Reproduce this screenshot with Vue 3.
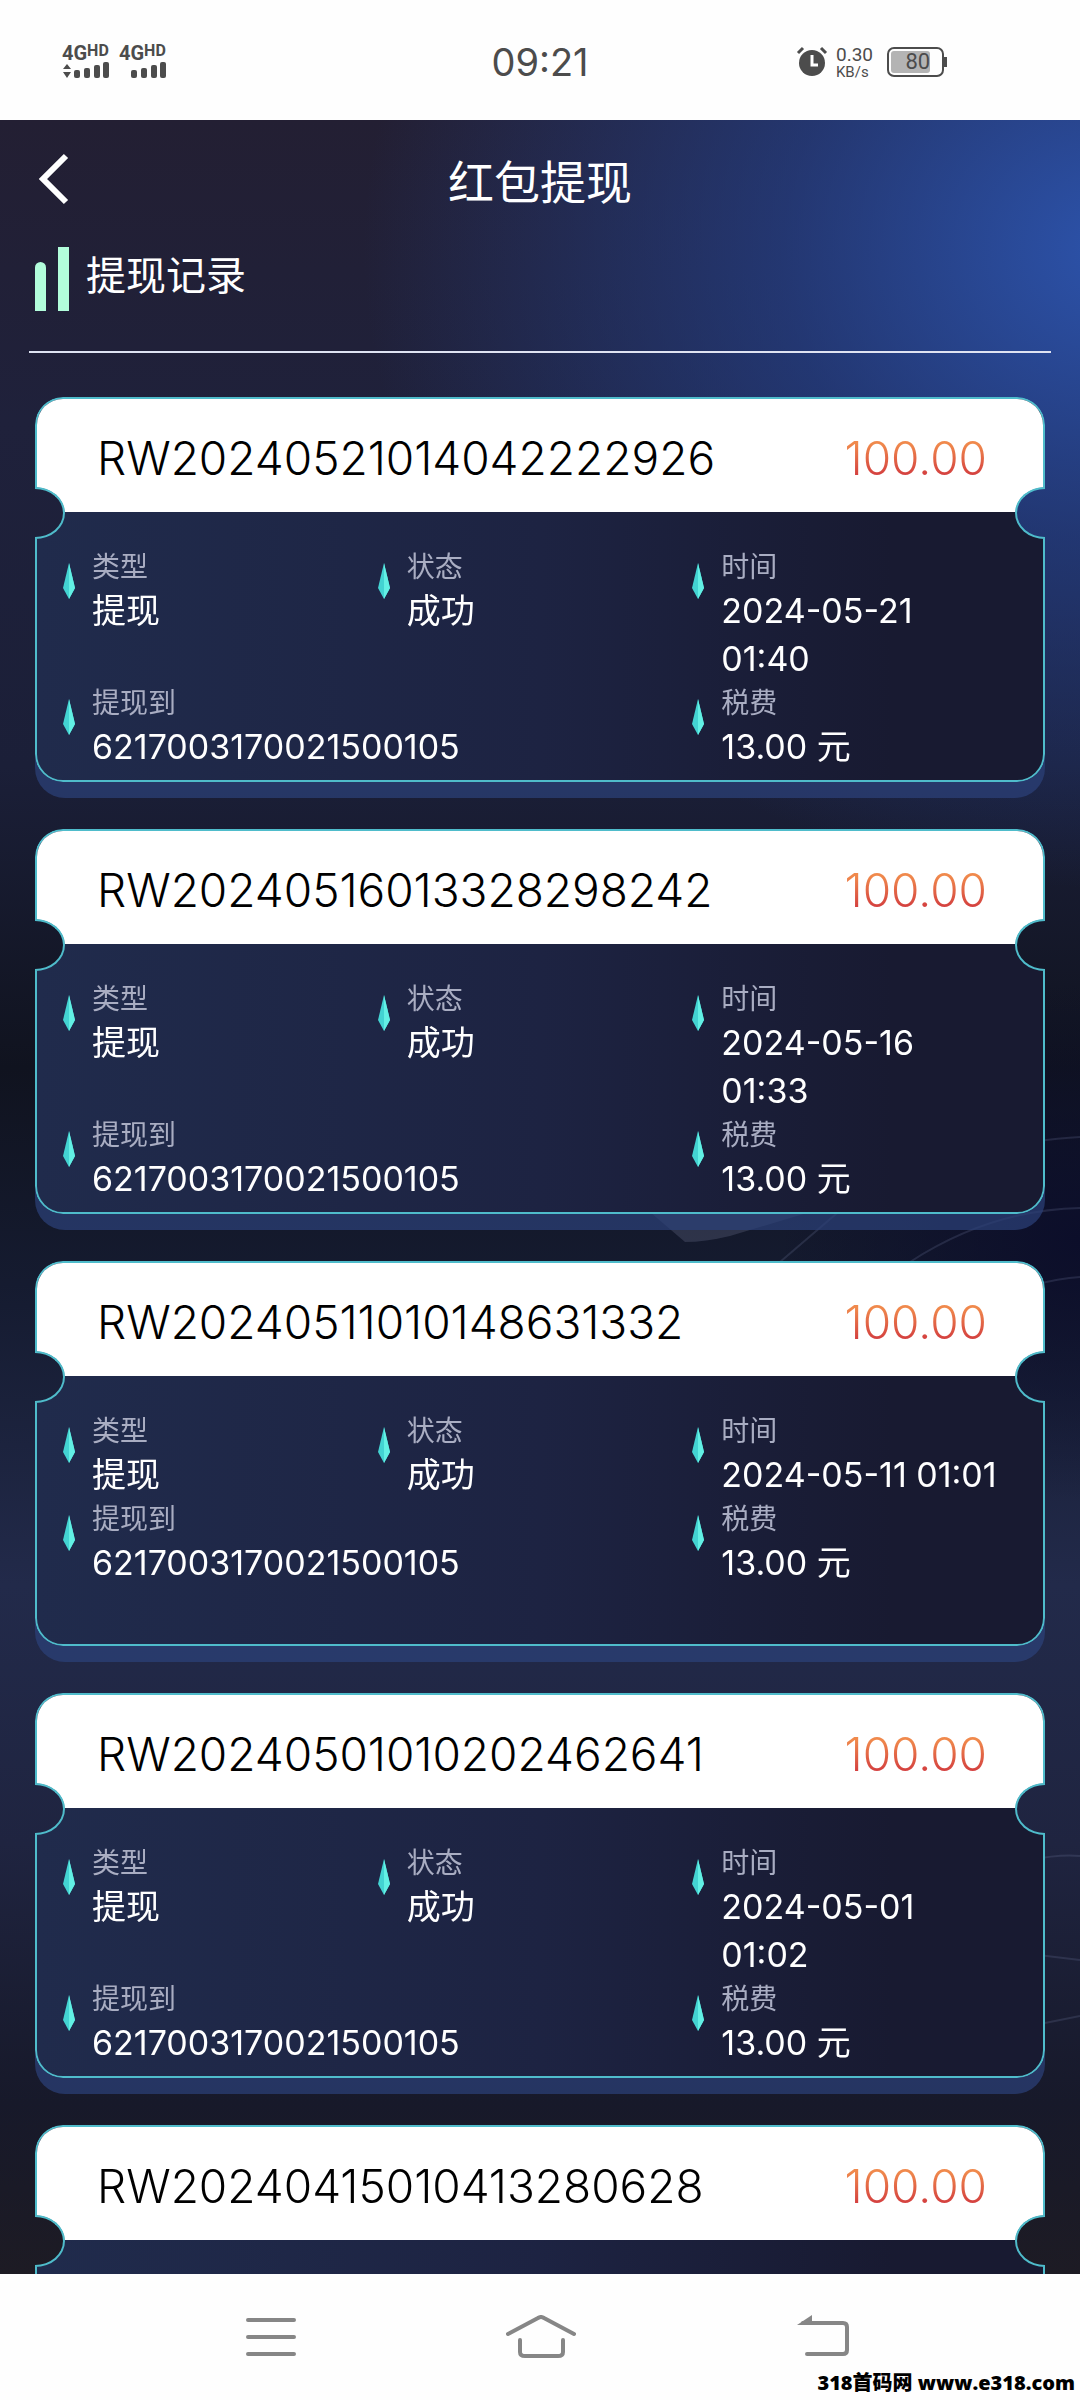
<script setup>
const fields = (time) => [
  { label: '类型', value: '提现' },
  { label: '状态', value: '成功' },
  { label: '时间', value: time },
  { label: '提现到', value: '6217003170021500105', wide: true },
  { label: '税费', value: '13.00 元' },
]

const records = [
  { id: 'RW20240521014042222926', amount: '100.00', fields: fields('2024-05-21 01:40') },
  { id: 'RW20240516013328298242', amount: '100.00', fields: fields('2024-05-16 01:33') },
  { id: 'RW20240511010148631332', amount: '100.00', fields: fields('2024-05-11 01:01') },
  { id: 'RW20240501010202462641', amount: '100.00', fields: fields('2024-05-01 01:02') },
  { id: 'RW20240415010413280628', amount: '100.00', fields: [] },
]
</script>

<template>
  <div class="phone">
    <header class="status">
      <div class="signals">
        <div v-for="sim in 2" :key="sim" class="signal">
          <div class="net">4G<span class="hd">HD</span></div>
          <svg width="48" height="18" viewBox="0 0 48 18" fill="#4c4c4c" aria-hidden="true">
            <path v-if="sim === 1" d="M1 8 5 3l4 5zM1 11h8l-4 6z" />
            <rect x="12" y="9" width="6" height="8" rx="2" />
            <rect x="22" y="7" width="6" height="10" rx="2" />
            <rect x="32" y="4" width="6" height="13" rx="2" />
            <rect x="41" y="1" width="6" height="16" rx="2" />
          </svg>
        </div>
      </div>
      <time class="clock">09:21</time>
      <div class="indicators">
        <svg width="32" height="32" viewBox="0 0 32 32" aria-hidden="true">
          <circle cx="16" cy="17" r="13" fill="#4c4c4c" />
          <path d="M2 7 7 2M30 7l-5-5" stroke="#4c4c4c" stroke-width="3" />
          <path d="M16 9v10h6" fill="none" stroke="#fff" stroke-width="3" />
        </svg>
        <div class="speed"><span class="rate">0.30</span><span class="unit">KB/s</span></div>
        <div class="battery"><div class="level">80</div></div>
      </div>
    </header>

    <main class="app">
      <svg class="scenery" viewBox="0 0 1080 2154" preserveAspectRatio="none" aria-hidden="true">
        <path d="M650 1092l35 30q20 0 45-6l80-24z" fill="#8d93b0" opacity=".22" />
        <path
          d="M780 1142l70-60M1030 1022q30-4 50-5M910 1142q80-52 170-54M1030 1166q30-8 50-9M1030 1740q30-6 50-4M1030 1834l50 6M780 1660l20 30M1030 1906l50-10"
          fill="none" stroke="#7d86ad" stroke-width="2" opacity=".2"
        />
      </svg>
      <div class="titlebar">
        <button class="back" type="button" aria-label="返回">
          <svg width="32" height="52" viewBox="0 0 32 52" fill="none" aria-hidden="true">
            <path d="M29 3 6 26l23 23" stroke="#fff" stroke-width="6" />
          </svg>
        </button>
        <h1>红包提现</h1>
      </div>
      <div class="section">
        <div class="bars"><i class="short"></i><i class="tall"></i></div>
        <h2>提现记录</h2>
      </div>
      <ul class="list">
        <li v-for="record in records" :key="record.id" class="ticket">
          <div class="surface">
            <div class="head">
              <span>{{ record.id }}</span>
              <strong class="amount">{{ record.amount }}</strong>
            </div>
            <dl class="details">
              <div
                v-for="field in record.fields"
                :key="field.label"
                class="field"
                :class="{ wide: field.wide }"
              >
                <svg class="gem" width="12" height="36" viewBox="0 0 12 36" aria-hidden="true">
                  <path d="M6 0 12 25 6 36 0 25z" fill="#43d3d2" />
                  <path d="M6 0 12 25 6 36z" fill="#62f0e4" />
                </svg>
                <div>
                  <dt>{{ field.label }}</dt>
                  <dd>{{ field.value }}</dd>
                </div>
              </div>
            </dl>
          </div>
          <i class="notch left"></i>
          <i class="notch right"></i>
        </li>
      </ul>
    </main>

    <nav class="keys">
      <button type="button" aria-label="菜单">
        <svg width="50" height="44" viewBox="0 0 50 44" aria-hidden="true">
          <path d="M2 5h46M2 22h46M2 39h46" />
        </svg>
      </button>
      <button type="button" aria-label="主页">
        <svg width="70" height="44" viewBox="0 0 70 44" aria-hidden="true">
          <path d="M2 19 32 3q3-2 6 0l30 16M14 25v12q0 4 5 4h33q5 0 5-4V25" />
        </svg>
      </button>
      <button type="button" aria-label="返回上一级">
        <svg width="64" height="44" viewBox="0 0 64 44" aria-hidden="true">
          <path d="M18 8h40q4 0 4 4v23q0 4-4 4H22" />
          <path class="tip" d="M12 10 27 0v10z" />
        </svg>
      </button>
      <a class="site" href="#">318首码网 www.e318.com</a>
    </nav>
  </div>
</template>

<style>
body {
  background: #fefefe;
}
</style>

<style scoped>
.phone {
  display: flex;
  flex-direction: column;
  height: 100vh;
  overflow: hidden;
  font-family: Inter, "Noto Sans CJK SC", sans-serif;
  background: #fefefe;
}

button {
  padding: 0;
  border: 0;
  background: none;
  display: block;
}

svg {
  display: block;
}

.status {
  flex: none;
  display: grid;
  grid-template-columns: 1fr auto 1fr;
  align-items: center;
  height: 120px;
  padding: 4px 62px 0;
  box-sizing: border-box;
  color: #4c4c4c;
}

.signals {
  display: flex;
  gap: 9px;
}

.signal {
  width: 48px;
}

.net {
  display: flex;
  font: 700 20px/16px Roboto, sans-serif;
}

.hd {
  font-size: 16px;
  line-height: 12px;
}

.clock {
  font-size: 38px;
}

.indicators {
  display: flex;
  justify-content: flex-end;
  align-items: center;
  gap: 8px;
  padding-right: 74px;
}

.speed {
  display: flex;
  flex-direction: column;
  font-family: Roboto, sans-serif;
}

.rate {
  font-size: 19px;
  line-height: 20px;
}

.unit {
  font-size: 15px;
  line-height: 15px;
}

.battery {
  position: relative;
  width: 57px;
  height: 30px;
  margin-left: 6px;
  padding: 2px;
  box-sizing: border-box;
  border: 2px solid #4c4c4c;
  border-radius: 7px;
}

.battery::after {
  content: "";
  position: absolute;
  right: -5px;
  top: 8px;
  width: 3px;
  height: 10px;
  background: #4c4c4c;
}

.level {
  width: 80%;
  height: 22px;
  box-sizing: border-box;
  background: #b4b4b4;
  border-radius: 3px;
  font: 400 22px/22px Roboto, sans-serif;
  text-align: right;
}

.app {
  position: relative;
  flex: 1;
  min-height: 0;
  overflow: hidden;
  color: #fff;
  background:
    radial-gradient(ellipse 760px 640px at 104% 6%, rgba(45, 86, 178, 0.95), rgba(37, 70, 152, 0.6) 45%, transparent),
    radial-gradient(ellipse 300px 260px at 100% 52%, #0c0e2a, transparent),
    linear-gradient(180deg, #231f33 0%, #1f213b 14%, #1b1f38 30%, #10131f 44%, #151b30 54%, #222a4a 68%, #1f2440 80%, #17192a 92%, #1d1b24 100%);
}

.scenery {
  position: absolute;
  inset: 0;
  width: 100%;
  height: 100%;
}

.titlebar {
  position: relative;
  display: flex;
  align-items: center;
  justify-content: center;
  height: 124px;
}

.back {
  position: absolute;
  left: 37px;
  top: 33px;
}

h1,
h2 {
  margin: 0;
  font-weight: 400;
}

h1 {
  font-size: 46px;
  line-height: 60px;
}

.section {
  position: relative;
  display: flex;
  align-items: flex-start;
  gap: 17px;
  height: 109px;
  margin: 0 29px;
  padding: 3px 6px 0;
  box-sizing: border-box;
  border-bottom: 2px solid #dfe3f2;
}

h2 {
  font-size: 40px;
  line-height: 58px;
}

.bars {
  display: flex;
  align-items: flex-end;
  gap: 12px;
  height: 64px;
}

.bars i {
  width: 11px;
  background: #b2fddb;
}

.short {
  height: 49px;
  border-radius: 6px 6px 0 0;
}

.tall {
  height: 64px;
}

.list {
  position: relative;
  display: flex;
  flex-direction: column;
  gap: 47px;
  margin: 0;
  padding: 44px 35px;
  list-style: none;
}

.ticket {
  position: relative;
}

/* Raised base showing under the ticket */
.ticket::before {
  content: "";
  position: absolute;
  left: 0;
  right: 0;
  bottom: -16px;
  height: 48px;
  border-radius: 0 0 30px 30px;
  background: rgba(44, 66, 122, 0.7);
}

.surface {
  position: relative;
  box-sizing: border-box;
  border: 2px solid #4fbccb;
  border-radius: 28px;
  overflow: hidden;
  background: linear-gradient(90deg, #202b4c, #1d2342 50%, #181a31 85%);
  mask:
    radial-gradient(ellipse 30px 26px at 0 116px, transparent 96%, #000),
    radial-gradient(ellipse 30px 26px at 100% 116px, transparent 96%, #000);
  mask-composite: intersect;
}

.notch {
  position: absolute;
  top: 90px;
  width: 30px;
  height: 52px;
  box-sizing: border-box;
  border: 2px solid #4fbccb;
}

.left {
  left: 0;
  border-left: 0;
  border-radius: 0 30px 30px 0 / 0 26px 26px 0;
}

.right {
  right: 0;
  border-right: 0;
  border-radius: 30px 0 0 30px / 26px 0 0 26px;
}

.head {
  display: flex;
  align-items: center;
  justify-content: space-between;
  height: 113px;
  padding: 4px 56px 0 60px;
  box-sizing: border-box;
  background: #fff;
  color: #000;
  font-size: 46px;
  font-weight: 350;
}

.amount {
  font-weight: 350;
  color: transparent;
  background: linear-gradient(180deg, #f0894c 25%, #d4403f 80%);
  background-clip: text;
}

.details {
  display: grid;
  grid-template-columns: repeat(3, 1fr);
  align-content: start;
  min-height: 268px;
  margin: 0;
  padding: 35px 36px 0 26px;
  box-sizing: border-box;
}

.field {
  display: flex;
  gap: 17px;
}

.wide {
  grid-column: span 2;
}

.gem {
  flex: none;
  margin-top: 16px;
}

dt {
  color: #a9adc2;
  font-size: 28px;
  line-height: 40px;
}

dd {
  margin: 0;
  font-size: 34px;
  line-height: 48px;
}

.keys {
  position: relative;
  flex: none;
  display: flex;
  align-items: center;
  justify-content: space-between;
  height: 126px;
  padding: 0 231px 0 246px;
  box-sizing: border-box;
  background: #fefefe;
}

.keys path {
  fill: none;
  stroke: #868686;
  stroke-width: 4;
  stroke-linecap: round;
}

.keys .tip {
  fill: #868686;
  stroke: none;
}

.site {
  position: absolute;
  right: 5px;
  bottom: 4px;
  color: #000;
  font: 800 20px/26px "Open Sans", "Noto Sans CJK SC", sans-serif;
  text-decoration: none;
}
</style>
